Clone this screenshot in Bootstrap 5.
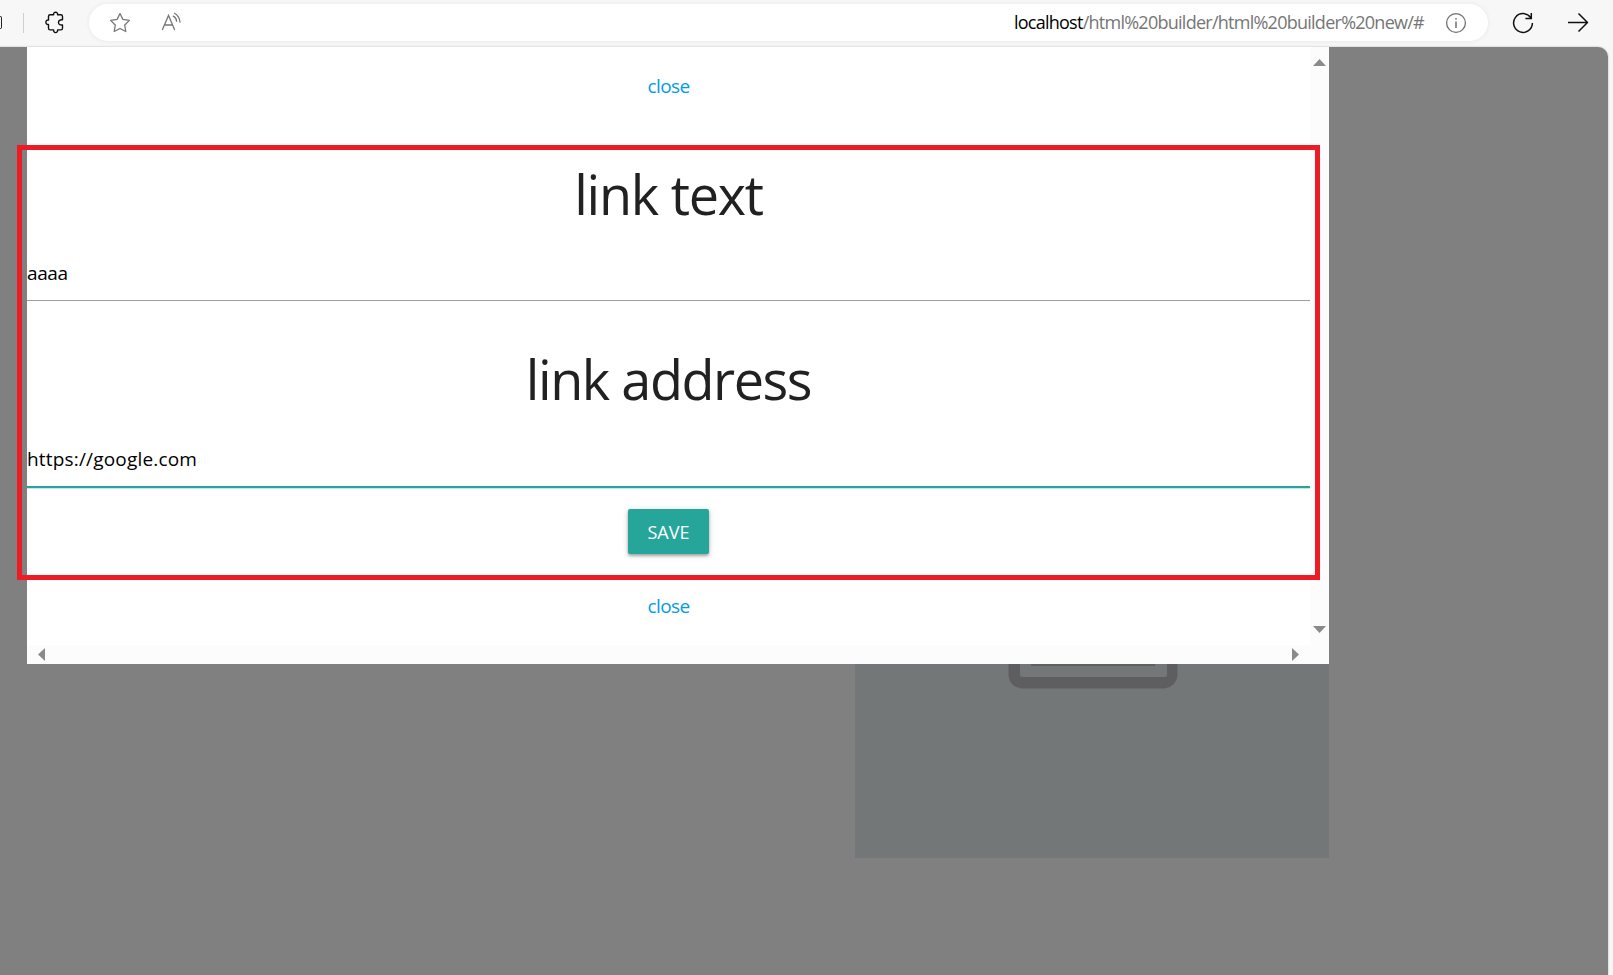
<!DOCTYPE html>
<html lang="en">
<head>
<meta charset="utf-8">
<title>html builder</title>
<link href="https://cdn.jsdelivr.net/npm/bootstrap@5.3.0/dist/css/bootstrap.min.css" rel="stylesheet">
<style>
body{font-family:"Open Sans","Noto Sans",sans-serif;background:#f7f7f7;height:975px;overflow:hidden;color:#212121}
.toolbar{height:47px;padding-bottom:2px}
.toolbar svg{display:block;flex:none}
.cut-icon{width:2px;height:13px;border:1.5px solid #222;border-left:0;border-radius:0 3px 3px 0}
.divider{width:1px;height:20px;background:#cfcfcf;margin-left:21px}
.icon-puzzle{margin-left:21px}
.omnibox{width:1399px;height:37px;margin-left:22px;background:#fff;box-shadow:0 0 5px rgba(0,0,0,.07)}
.icon-star{margin-left:20px}
.icon-read{margin-left:30px}
.icon-info{margin:0 21px}
.icon-reload{margin-left:24px}
.icon-next{margin-left:33px}
.url{font-size:18px;letter-spacing:-.74px;color:#767676;line-height:34px;padding-bottom:2px;white-space:nowrap}
.url span{color:#000}
.viewport{width:1608px;height:928px;background:#808080;border-radius:0 10px 0 0;padding-left:27px;box-shadow:0 0 2px rgba(0,0,0,.3)}
.dialog-box{width:1302px;height:617px;background:#fcfcfc;display:grid;grid-template-columns:1283px 19px;grid-template-rows:598px 19px}
.dialog-body{background:#fff;padding-top:24px}
.dialog-body a{font-size:19px;line-height:30px;height:30px;color:#039be5;letter-spacing:-.6px}
.dialog-body h2{font-size:54px;line-height:60px;height:60px;font-weight:400;margin:63px 0 0;letter-spacing:-1.25px}
.dialog-body h2.address{margin-top:48px;letter-spacing:-1.45px}
.dialog-body .second-close{margin-top:37px}
.field{display:block;box-sizing:content-box;width:100%;height:54px;margin-top:22px;border:0;border-bottom:1px solid #9e9e9e;padding:0;outline:0;font-size:19px;letter-spacing:-.4px;color:#000;background:transparent}
.field.active{margin-top:23px;letter-spacing:.18px;border-bottom:2px solid #26a69a;box-shadow:0 1px 0 #c5e7e4}
.btn-save{width:81px;height:45px;margin-top:21px;background:#26a69a;color:#fff;border:0;border-radius:2px;font-size:18px;line-height:45px;padding:1px 0 0;box-shadow:0 2px 3px rgba(0,0,0,.28),0 1px 6px rgba(0,0,0,.16)}
.scroll-y{padding:12px 0}
.scroll-x{padding:0 11px}
.tile{width:474px;height:194px;margin-left:828px;padding-left:153px;background:#737777}
.marker{left:17px;top:98px;width:1303px;height:435px;border:5px solid #ed1c24;pointer-events:none}
</style>
<script src="https://cdn.jsdelivr.net/npm/bootstrap@5.3.0/dist/js/bootstrap.bundle.min.js"></script>
</head>
<body>
<header class="toolbar d-flex align-items-center">
  <div class="cut-icon"></div>
  <div class="divider"></div>
  <svg class="icon-puzzle" width="22" height="24" viewBox="0 0 22 24" fill="none" stroke="#111" stroke-width="1.4" stroke-linejoin="round"><path d="M5.2 3.800h3.400c-.2-1.600.7-2.600 2-2.600s2.200 1 2 2.600h3.200q1.700 0 1.700 1.700v3.300c-2.600-.3-4 .8-4 2.600s1.400 2.900 4 2.600v3.200q0 1.700-1.700 1.700h-3.200c.2 1.700-.7 2.700-2 2.700s-2.200-1-2-2.700H5.200q-1.700 0-1.700-1.700v-3.700C1.800 13.700.9 12.700.9 11.300s.9-2.400 2.600-2.200V5.500q0-1.700 1.700-1.700Z"/></svg>
  <div class="omnibox rounded-pill d-flex align-items-center">
    <svg class="icon-star" width="22" height="22" viewBox="0 0 22 22" fill="none" stroke="#767676" stroke-width="1.300" stroke-linejoin="round"><path d="m11 1.500 2.900 5.900 6.500 1-4.700 4.600 1.100 6.500L11 16.500l-5.800 3 1.100-6.500-4.700-4.600 6.500-1Z"/></svg>
    <svg class="icon-read" width="22" height="21" viewBox="0 0 22 21" fill="none" stroke="#767676" stroke-width="1.300" stroke-linecap="round"><path d="M1.500 17.500 7.500 3.500 13.500 17.500M3.500 13h8M12.300 4.200q3 1.500 3.300 5M13.500 1.200q5 2.800 5.500 9"/></svg>
    <div class="url ms-auto"><span>localhost</span>/html%20builder/html%20builder%20new/#</div>
    <svg class="icon-info" width="22" height="22" viewBox="0 0 22 22" fill="none" stroke="#707070" stroke-width="1.300"><circle cx="11" cy="11" r="9.400"/><path d="M11 9.500V16M11 6v1.600" stroke-width="1.500"/></svg>
  </div>
  <svg class="icon-reload" width="22" height="22" viewBox="0 0 22 22" fill="none" stroke="#111" stroke-width="1.500"><path d="M20.400 11A9.400 9.400 0 1 1 18.700 5.600M19.300 1v5.600h-5.900"/></svg>
  <svg class="icon-next" width="22" height="20" viewBox="0 0 22 20" fill="none" stroke="#111" stroke-width="1.500" stroke-linejoin="round"><path d="M1 9.500H20.500M11.500.5l9 9-9 9"/></svg>
</header>
<main class="viewport position-relative">
  <section class="dialog-box">
    <div class="dialog-body d-flex flex-column align-items-center">
      <a class="text-decoration-none" href="#">close</a>
      <h2>link text</h2>
      <input class="field" value="aaaa" aria-label="link text">
      <h2 class="address">link address</h2>
      <input class="field active" value="https://google.com" aria-label="link address">
      <button class="btn btn-save">SAVE</button>
      <a class="second-close text-decoration-none" href="#">close</a>
    </div>
    <div class="scroll-y d-flex flex-column justify-content-between align-items-center">
      <svg width="13" height="7" viewBox="0 0 13 7" fill="#8a8a8a"><path d="M0 7 6.500 0 13 7Z"/></svg>
      <svg width="13" height="7" viewBox="0 0 13 7" fill="#8a8a8a"><path d="M0 0h13L6.500 7Z"/></svg>
    </div>
    <div class="scroll-x d-flex justify-content-between align-items-center">
      <svg width="7" height="13" viewBox="0 0 7 13" fill="#8a8a8a"><path d="M7 0v13L0 6.500Z"/></svg>
      <svg width="7" height="13" viewBox="0 0 7 13" fill="#8a8a8a"><path d="M0 0v13L7 6.500Z"/></svg>
    </div>
  </section>
  <div class="tile">
    <svg class="d-block" width="171" height="26" viewBox="0 0 171 26"><path d="M.5 0v11.500q1 11 13 13h143q12-2 13-13V0H159v11q0 2-2 2H14q-2 0-2-2V0Z" fill="#5e5e60"/><path d="M23 0h124v2H23Z" fill="#5d625f"/></svg>
  </div>
  <div class="marker position-absolute"></div>
</main>
</body>
</html>
